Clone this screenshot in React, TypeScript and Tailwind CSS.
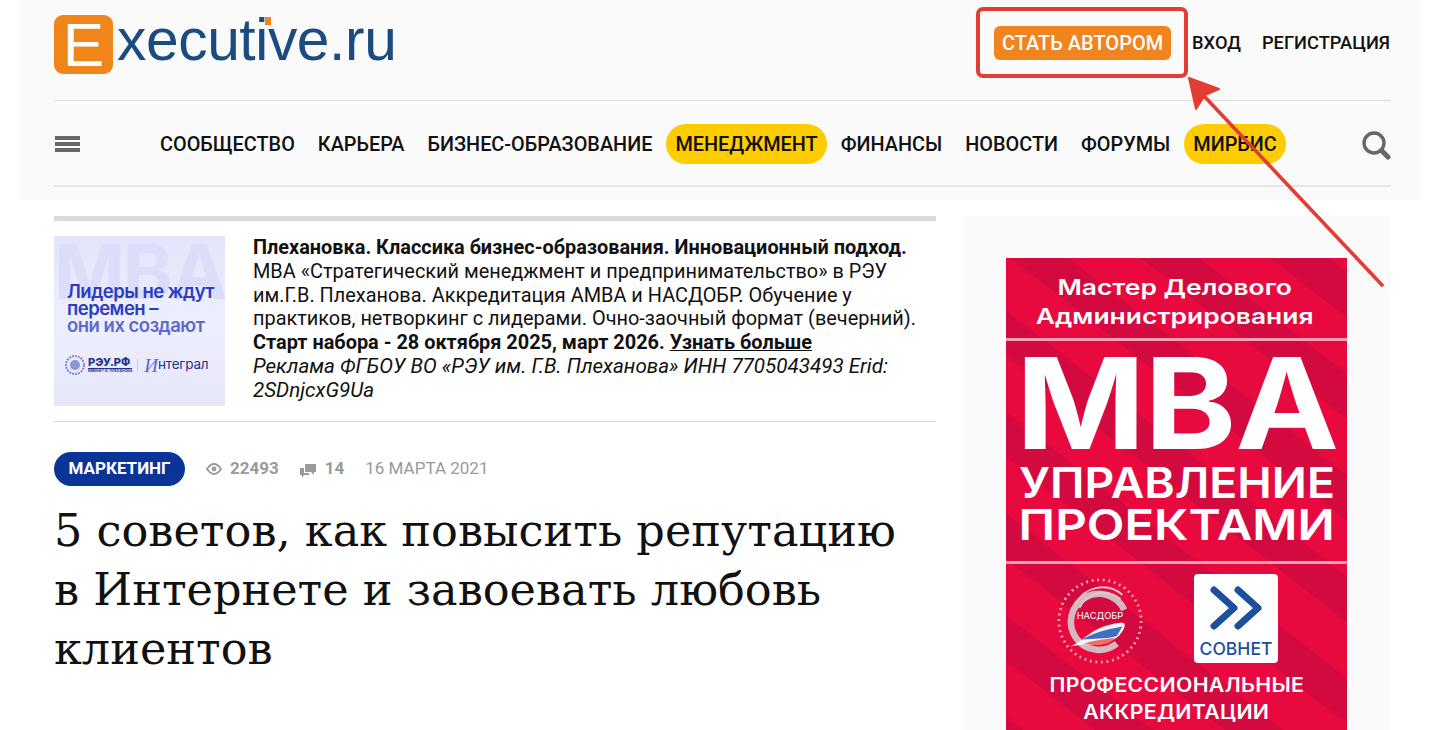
import React from "react";

const nav: [string, boolean][] = [
  ["СООБЩЕСТВО", false],
  ["КАРЬЕРА", false],
  ["БИЗНЕС-ОБРАЗОВАНИЕ", false],
  ["МЕНЕДЖМЕНТ", true],
  ["ФИНАНСЫ", false],
  ["НОВОСТИ", false],
  ["ФОРУМЫ", false],
  ["МИРБИС", true],
];

function Header() {
  return (
    <header className="mx-5 h-[200px] bg-[#fafafa] pl-[34px] pr-[29px]">
      <div className="flex h-[101px] items-start justify-between border-b border-[#dedede]">
        <div className="relative mt-[15px] flex items-start">
          <div className="flex h-[59px] w-[59px] items-center justify-center rounded-[9px] bg-[#f08519] font-['Liberation_Sans',sans-serif] text-[62px] font-light leading-none text-white">
            E
          </div>
          <span className="-mt-[11px] ml-[4px] font-['Liberation_Sans',sans-serif] text-[58.7px] leading-[72px] tracking-[-0.4px] text-[#1a4c80]">
            xecutive.ru
          </span>
          <span className="absolute left-[211px] top-[2px] h-[8px] w-[6px] bg-[#f08519]" />
        </div>
        <div className="mt-[26px] flex items-center">
          <span className="flex h-[34px] w-[177px] items-center justify-center rounded-[6px] bg-[#f0841e] text-[20px] font-medium text-white">
            СТАТЬ АВТОРОМ
          </span>
          <span className="ml-[21px] text-[18.3px] font-medium text-[#111]">ВХОД</span>
          <span className="ml-[21px] mr-px text-[18.3px] font-medium text-[#111]">РЕГИСТРАЦИЯ</span>
        </div>
      </div>
      <div className="flex h-[86px] items-center border-b-2 border-[#e4e4e4] pt-[2px]">
        <div className="flex w-[97px] flex-col gap-[2px] pl-px">
          <span className="h-[4px] w-[25px] bg-[#666]" />
          <span className="h-[4px] w-[25px] bg-[#666]" />
          <span className="h-[4px] w-[25px] bg-[#666]" />
        </div>
        <nav className="flex items-center gap-[5px]">
          {nav.map(([t, hi]) => (
            <span
              key={t}
              className={
                hi
                  ? "rounded-full bg-[#ffcc00] px-[9px] pb-[5px] pt-[7px] text-[19.87px] font-medium leading-[28px] text-[#111]"
                  : "px-[9px] pb-[5px] pt-[7px] text-[19.87px] font-medium leading-[28px] text-[#111]"
              }
            >
              {t}
            </span>
          ))}
        </nav>
        <svg className="ml-auto mt-[2px]" width="30" height="30" viewBox="0 0 30 30" fill="none">
          <circle cx="13" cy="13" r="10" stroke="#666" strokeWidth="3.4" />
          <path d="M20.5 20.5 27 27" stroke="#666" strokeWidth="5" strokeLinecap="round" />
        </svg>
      </div>
    </header>
  );
}

function PromoImage() {
  return (
    <div className="relative h-[170px] w-[171px] shrink-0 overflow-hidden bg-gradient-to-b from-[#e2e4fb] via-[#eeeffd] to-[#e6e6fa] font-['Inter',sans-serif]">
      <div className="absolute left-0 top-0 w-full text-center text-[76px] font-bold leading-[70px] tracking-[-2px] text-[#dcdef9]">MBA</div>
      <div className="relative pl-[13px] pt-[47px]">
        <div className="whitespace-nowrap text-[18.5px] font-semibold leading-[17px] tracking-[-0.5px] text-[#2a3cc4]">
          Лидеры не ждут
          <br />
          перемен –
          <br />
          <span className="text-[#5d69cf]">они их создают</span>
        </div>
        <div className="-ml-[2px] mt-[21px] flex items-center whitespace-nowrap">
          <svg className="shrink-0" width="20" height="20" viewBox="0 0 20 20" fill="none">
            <circle cx="10" cy="10" r="9" stroke="#7f8ad4" strokeWidth="2" strokeDasharray="2 1" />
            <circle cx="10" cy="10" r="5" fill="#8b95d8" />
          </svg>
          <div className="ml-[3px] mr-[5px] shrink-0">
            <div className="border-b border-[#27348b] text-[11px] font-extrabold leading-[11px] text-[#27348b]">РЭУ.РФ</div>
            <div className="text-[3.500px] font-bold leading-[5px] text-[#27348b]">ИМЕНИ Г.В. ПЛЕХАНОВА</div>
          </div>
          <span className="mr-[6px] h-[12px] w-px shrink-0 bg-[#c9cdef]" />
          <span className="font-['Liberation_Serif',serif] text-[19px] italic leading-none text-[#5d69cf]">И</span>
          <span className="text-[13.5px] leading-none tracking-[-0.2px] text-[#27348b]">нтеграл</span>
        </div>
      </div>
    </div>
  );
}

function Promo() {
  return (
    <section className="mt-[16px] border-t-[5px] border-b border-t-[#dadada] border-b-[#d4d4d4] pb-[15px] pt-[15px]">
      <div className="flex">
        <PromoImage />
        <div className="ml-[28px] text-[19.9px] leading-[23.8px] text-[#111]">
          <b className="font-bold">Плехановка. Классика бизнес-образования. Инновационный подход.</b>
          <br />
          МВА «Стратегический менеджмент и предпринимательство» в РЭУ
          <br />
          им.Г.В. Плеханова. Аккредитация АМВА и НАСДОБР. Обучение у
          <br />
          практиков, нетворкинг с лидерами. Очно-заочный формат (вечерний).
          <br />
          <b className="font-bold">Старт набора - 28 октября 2025, март 2026.</b>{" "}
          <b className="font-bold underline">Узнать больше</b>
          <br />
          <i className="text-[20.6px]">Реклама ФГБОУ ВО «РЭУ им. Г.В. Плеханова» ИНН 7705043493 Erid:</i>
          <br />
          <i className="text-[20.6px]">2SDnjcxG9Ua</i>
        </div>
      </div>
    </section>
  );
}

function Meta() {
  return (
    <div className="mt-[30px] flex h-[34px] items-center text-[#9a9a9a]">
      <span className="flex h-[34px] w-[131px] items-center justify-center rounded-full bg-[#0b3499] text-[17px] font-bold text-white">
        МАРКЕТИНГ
      </span>
      <svg className="ml-[21px]" width="16" height="12" viewBox="0 0 16 12" fill="none">
        <path d="M1 6c2-3 4.400-5 7-5s5 2 7 5c-2 3-4.400 5-7 5S3 9 1 6Z" stroke="#9a9a9a" strokeWidth="1.800" />
        <circle cx="8" cy="6" r="2.400" fill="#9a9a9a" />
      </svg>
      <span className="ml-[8px] text-[17px] font-bold">22493</span>
      <svg className="ml-[21px] mt-[3px]" width="16" height="14" viewBox="0 0 16 14" fill="#9a9a9a">
        <path d="M5 0h11v8h-2v3l-3-3H5Z" />
        <path d="M0 4h4v5h5v2H4l-2 3v-3H0Z" />
      </svg>
      <span className="ml-[9px] text-[17px] font-bold">14</span>
      <span className="ml-[21px] text-[17px]">16 МАРТА 2021</span>
    </div>
  );
}

function Sovnet() {
  return (
    <div className="flex h-[89px] w-[84px] flex-col items-center rounded-[4px] bg-white">
      <svg className="mt-[12px]" width="52" height="44" viewBox="0 0 52 44" fill="none" stroke="#1c4f9c" strokeWidth="7" strokeLinecap="round" strokeLinejoin="round">
        <path d="M4 4l20 18L4 40" />
        <path d="M28 4l20 18-20 18" />
      </svg>
      <span className="mt-[9px] text-[17.5px] font-medium leading-[20px] text-[#1c4f9c]">СОВНЕТ</span>
    </div>
  );
}

function Nasdobr() {
  return (
    <svg className="mt-[4px]" width="90" height="86" viewBox="0 0 96 92" fill="none">
      <circle cx="48" cy="46" r="44" stroke="#f3a3b5" strokeWidth="3" strokeDasharray="2 4" />
      <path d="M74 34A30 30 0 1 0 66 70" stroke="#d6b9c0" strokeWidth="7" />
      <path d="M22 28A32 32 0 0 1 72 18" stroke="#e2c7cd" strokeWidth="2" />
      <path d="M26 32A28 28 0 0 1 70 23" stroke="#e2c7cd" strokeWidth="2" />
      <text x="48" y="44" textAnchor="middle" fontSize="10" fill="#fff" fontFamily="Inter, sans-serif">НАСДОБР</text>
      <path d="M14 74C30 70 36 52 70 48 78 47 74 56 68 62 52 76 32 68 14 74Z" fill="#f8f2f2" />
      <path d="M28 66C40 60 50 56 72 52L66 62C52 66 42 64 28 66Z" fill="#3f6fc0" />
      <path d="M30 71C42 66 52 66 64 64 54 75 42 71 30 71Z" fill="#f0705f" />
    </svg>
  );
}

function Ad() {
  return (
    <aside className="ml-[28px] mt-[16px] h-[600px] w-[427px] shrink-0 bg-[#fafafa] px-[42px] pt-[42px]">
      <div className="h-[560px] w-[341px] overflow-hidden bg-[repeating-linear-gradient(38deg,#e80a3f_0px,#e80a3f_44px,#d20a3f_44px,#d20a3f_80px)] font-['Inter',sans-serif] text-white">
        <div className="flex h-[83px] flex-col items-center justify-center border-b-[3px] border-[#ff9fb5] pr-[3px] pt-[8px] text-[22px] font-semibold leading-[29px]">
          <span className="scale-x-[1.2]">Мастер Делового</span>
          <span className="scale-x-[1.2]">Администрирования</span>
        </div>
        <div className="flex h-[223px] flex-col items-center border-b-[3px] border-[#ff9fb5]">
          <span className="mt-[4px] scale-x-[1.105] text-[126px] font-bold leading-[116px] tracking-[-1px]">MBA</span>
          <span className="scale-x-[1.075] text-[43px] font-semibold leading-[42px]">УПРАВЛЕНИЕ</span>
          <span className="scale-x-[1.14] text-[43px] font-semibold leading-[42px]">ПРОЕКТАМИ</span>
        </div>
        <div className="flex flex-col items-center">
          <div className="flex w-full items-start gap-[49px] pl-[49px] pt-[10px]">
            <Nasdobr />
            <Sovnet />
          </div>
          <span className="mt-[8px] scale-x-[1.09] text-[19.5px] font-semibold leading-[27px] tracking-[0.3px]">ПРОФЕССИОНАЛЬНЫЕ</span>
          <span className="scale-x-[1.09] text-[19.5px] font-semibold leading-[27px] tracking-[0.3px]">АККРЕДИТАЦИИ</span>
        </div>
      </div>
    </aside>
  );
}

function Annotation() {
  return (
    <>
      <div className="pointer-events-none absolute left-[976px] top-[7px] h-[71px] w-[212px] rounded-[7px] border-[4px] border-[#e23d32]" />
      <svg className="pointer-events-none absolute left-[1180px] top-[72px]" width="215" height="225" viewBox="0 0 215 225" fill="none">
        <path d="M202 213 24 24" stroke="#e23d32" strokeWidth="3.600" strokeLinecap="round" />
        <path d="M9 6 39 17 25 23 16 37Z" fill="#e23d32" stroke="#e23d32" strokeWidth="2" strokeLinejoin="round" />
      </svg>
    </>
  );
}

export default function App() {
  return (
    <div className="relative h-[730px] w-[1440px] overflow-hidden bg-white font-['Roboto',sans-serif]">
      <Header />
      <main className="flex pl-[54px]">
        <div className="w-[882px] shrink-0">
          <Promo />
          <Meta />
          <h1 className="mt-[16px] font-['DejaVu_Serif',serif] text-[44.6px] font-normal leading-[59px] text-[#111]">
            5 советов, как повысить репутацию
            <br />в Интернете и завоевать любовь
            <br />
            клиентов
          </h1>
        </div>
        <Ad />
      </main>
      <Annotation />
    </div>
  );
}
